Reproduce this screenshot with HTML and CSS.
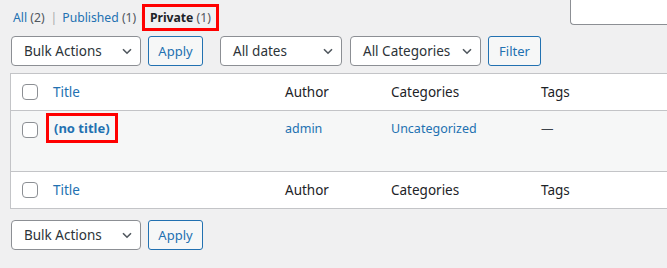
FILE: index.html
```html
<!DOCTYPE html>
<html lang="en">
<head>
    <meta charset="UTF-8">
    <title>Posts</title>
    <link rel="stylesheet" href="styles.css">
</head>
<body>
    <div class="wrap">
        <div class="top">
            <ul class="subsubsub">
                <li><a href="#">All <span class="count">(2)</span></a><span class="sep">|</span></li>
                <li><a href="#">Published <span class="count">(1)</span></a><span class="sep last">|</span></li>
                <li><span class="mark current"><b>Private</b> <span class="count">(1)</span></span></li>
            </ul>
            <div class="search"></div>
        </div>

        <div class="tablenav">
            <div class="sel bulk">Bulk Actions
                <svg width="10" height="7" viewBox="0 0 10 7"><path d="M1 1.2 L5 5.2 L9 1.2" fill="none" stroke="#50575e" stroke-width="1.6"/></svg>
            </div>
            <a class="btn apply" href="#">Apply</a>
            <div class="sel dates">All dates
                <svg width="10" height="7" viewBox="0 0 10 7"><path d="M1 1.2 L5 5.2 L9 1.2" fill="none" stroke="#50575e" stroke-width="1.6"/></svg>
            </div>
            <div class="sel cats">All Categories
                <svg width="10" height="7" viewBox="0 0 10 7"><path d="M1 1.2 L5 5.2 L9 1.2" fill="none" stroke="#50575e" stroke-width="1.6"/></svg>
            </div>
            <a class="btn filter" href="#">Filter</a>
        </div>

        <table class="posts">
            <colgroup>
                <col class="c-cb">
                <col class="c-title">
                <col class="c-author">
                <col class="c-cats">
                <col class="c-tags">
                <col>
            </colgroup>
            <thead>
                <tr>
                    <th class="cb-col"><span class="cb"></span></th>
                    <th><a href="#">Title</a></th>
                    <th>Author</th>
                    <th>Categories</th>
                    <th>Tags</th>
                    <th></th>
                </tr>
            </thead>
            <tbody>
                <tr>
                    <td class="cb-col"><span class="cb"></span></td>
                    <td><strong class="mark row-title"><a href="#">(no title)</a></strong></td>
                    <td><a href="#">admin</a></td>
                    <td><a href="#">Uncategorized</a></td>
                    <td>—</td>
                    <td></td>
                </tr>
            </tbody>
            <tfoot>
                <tr>
                    <th class="cb-col"><span class="cb"></span></th>
                    <th><a href="#">Title</a></th>
                    <th>Author</th>
                    <th>Categories</th>
                    <th>Tags</th>
                    <th></th>
                </tr>
            </tfoot>
        </table>

        <div class="tablenav bottom">
            <div class="sel bulk">Bulk Actions
                <svg width="10" height="7" viewBox="0 0 10 7"><path d="M1 1.2 L5 5.2 L9 1.2" fill="none" stroke="#50575e" stroke-width="1.6"/></svg>
            </div>
            <a class="btn apply" href="#">Apply</a>
        </div>
    </div>
</body>
</html>
```

FILE: styles.css
```css
/* Listado de entradas */
body {
    margin: 0;
    background: #f0f0f1;
    font-family: "Noto Sans", sans-serif;
    font-size: 13px;
    color: #3c434a;
    overflow: hidden;
}

a {
    color: #2271b1;
    text-decoration: none;
}

.wrap {
    padding-left: 10px;
}

.top {
    display: flex;
    justify-content: space-between;
    align-items: flex-start;
    height: 36px;
}

.subsubsub {
    list-style: none;
    margin: 4px 0 0 3px;
    padding: 0;
    display: flex;
    align-items: center;
    font-size: 12.2px;
    line-height: 20px;
}
.subsubsub .count {
    color: #50575e;
}
.subsubsub .sep {
    color: #a7aaad;
    margin: 0 5px 0 6px;
}
.subsubsub .sep.last {
    margin: 0 3px 0 3px;
}
.subsubsub .current b {
    color: #1d2327;
}

.mark {
    border: 3px solid #f00;
}
.subsubsub .mark {
    display: inline-block;
    padding: 1px 5px 0;
    margin-left: -7px;
}

.search {
    width: 110px;
    height: 30px;
    margin: -5px -13px 0 0;
    box-sizing: border-box;
    background: #fff;
    border-left: 1px solid #8c8f94;
    border-bottom: 1px solid #8c8f94;
    border-radius: 0 0 0 4px;
}

.tablenav {
    display: flex;
    align-items: center;
    height: 30px;
}
.tablenav.bottom {
    margin-top: 11px;
}

.sel {
    height: 30px;
    box-sizing: border-box;
    border: 1px solid #8c8f94;
    border-radius: 4px;
    background: #fff;
    color: #2c3338;
    font-size: 13.5px;
    display: flex;
    align-items: center;
    justify-content: space-between;
    padding: 0 8px 0 12px;
}
.sel.bulk {
    width: 130px;
    margin-left: 1px;
}
.sel.dates {
    width: 122px;
    margin-left: 17px;
}
.sel.cats {
    width: 131px;
    margin-left: 8px;
}

.btn {
    height: 30px;
    box-sizing: border-box;
    border: 1px solid #2271b1;
    border-radius: 3px;
    background: #f6f7f7;
    color: #2271b1;
    display: flex;
    align-items: center;
    justify-content: center;
}
.btn.apply {
    width: 55px;
    margin-left: 7px;
}
.btn.filter {
    width: 53px;
    margin-left: 7px;
}

.posts {
    margin-top: 7px;
    width: 720px;
    table-layout: fixed;
    border: 1px solid #c3c4c7;
    border-spacing: 0;
    background: #fff;
}
.c-cb { width: 32px; }
.c-title { width: 232px; }
.c-author { width: 106px; }
.c-cats { width: 150px; }
.c-tags { width: 100px; }

th, td {
    text-align: left;
    padding: 8px 10px;
    line-height: 20px;
}
th {
    font-weight: normal;
    font-size: 13.5px;
    color: #1d2327;
}
td {
    font-size: 12.5px;
}
thead th {
    border-bottom: 1px solid #c3c4c7;
}
tfoot th {
    border-top: 1px solid #c3c4c7;
}

tbody tr {
    height: 60px;
}
tbody td {
    background: #f6f7f7;
    vertical-align: top;
}

.cb-col {
    padding: 0 0 0 11px;
    vertical-align: middle;
}
tbody .cb-col {
    padding-top: 11px;
    vertical-align: top;
}
.cb {
    display: block;
    width: 16px;
    height: 16px;
    box-sizing: border-box;
    border: 1px solid #8c8f94;
    border-radius: 4px;
    background: #fff;
}

.row-title {
    display: inline-block;
    padding: 2px 5px;
    margin: -6px 0 0 -7px;
    font-size: 13px;
}
```
